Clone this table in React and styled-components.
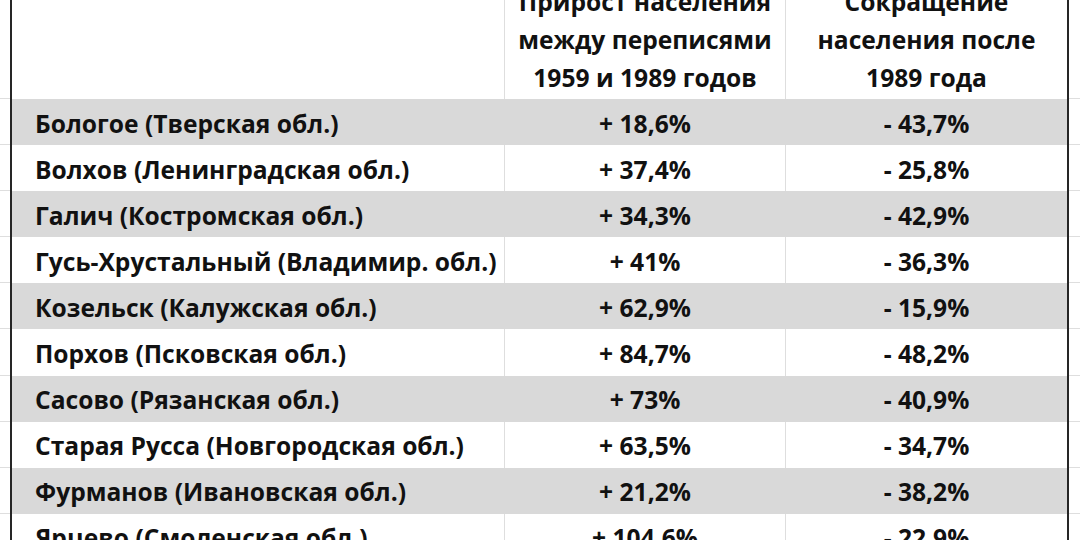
import React from "react";
import styled, { createGlobalStyle } from "styled-components";

const COLORS = {
  shade: "#d9d9d9",
  grid: "#dedede",
  frame: "#262626",
  text: "#111111",
};

const rows = [
  { city: "Бологое (Тверская обл.)", growth: "+ 18,6%", drop: "- 43,7%" },
  { city: "Волхов (Ленинградская обл.)", growth: "+ 37,4%", drop: "- 25,8%" },
  { city: "Галич (Костромская обл.)", growth: "+ 34,3%", drop: "- 42,9%" },
  { city: "Гусь-Хрустальный (Владимир. обл.)", growth: "+ 41%", drop: "- 36,3%" },
  { city: "Козельск (Калужская обл.)", growth: "+ 62,9%", drop: "- 15,9%" },
  { city: "Порхов (Псковская обл.)", growth: "+ 84,7%", drop: "- 48,2%" },
  { city: "Сасово (Рязанская обл.)", growth: "+ 73%", drop: "- 40,9%" },
  { city: "Старая Русса (Новгородская обл.)", growth: "+ 63,5%", drop: "- 34,7%" },
  { city: "Фурманов (Ивановская обл.)", growth: "+ 21,2%", drop: "- 38,2%" },
  { city: "Ярцево (Смоленская обл.)", growth: "+ 104,6%", drop: "- 22,9%" },
];

const GlobalStyle = createGlobalStyle`
  html, body {
    margin: 0;
    padding: 0;
    background: #fff;
    overflow: hidden;
  }
  body {
    font-family: "Open Sans", "Noto Sans", "DejaVu Sans", sans-serif;
    color: ${COLORS.text};
  }
`;

const Sheet = styled.div`
  display: flex;
  flex-direction: column;
  width: 1080px;
  height: 540px;
  overflow: hidden;
`;

const Row = styled.div`
  display: flex;
  height: ${(p) => p.height}px;
  flex-shrink: 0;
`;

const Gutter = styled.div`
  width: ${(p) => p.width}px;
  flex-shrink: 0;
  border-bottom: 1px solid ${COLORS.grid};
  box-sizing: border-box;
`;

const Body = styled.div`
  display: grid;
  grid-template-columns: 493px 281px 1fr;
  grid-template-rows: minmax(0, 1fr);
  width: 1059px;
  flex-shrink: 0;
  border-left: 2px solid ${COLORS.frame};
  border-right: 2px solid ${COLORS.frame};
  box-sizing: border-box;
  background: ${(p) => (p.shaded ? COLORS.shade : "#fff")};
`;

const Cell = styled.div`
  display: flex;
  align-items: center;
  justify-content: ${(p) => (p.left ? "flex-start" : "center")};
  padding-left: ${(p) => (p.left ? "23px" : "0")};
  padding-top: 2px;
  border-right: ${(p) => (p.divider ? `1px solid ${p.shaded ? "transparent" : COLORS.grid}` : "none")};
  font-size: 24.6px;
  font-weight: 700;
  white-space: nowrap;
`;

const HeadCell = styled.div`
  display: flex;
  flex-direction: column;
  justify-content: flex-end;
  align-items: center;
  min-height: 0;
  padding-bottom: 2px;
  border-right: ${(p) => (p.divider ? `1px solid ${COLORS.grid}` : "none")};
  font-size: 24.6px;
  font-weight: 700;
  line-height: 38px;
  text-align: center;
  white-space: nowrap;

  span {
    flex-shrink: 0;
  }
`;

export default function App() {
  return (
    <>
      <GlobalStyle />
      <Sheet>
        <Row height={99}>
          <Gutter width={10} />
          <Body>
            <HeadCell divider />
            <HeadCell divider>
              <span>Прирост населения</span>
              <span>между переписями</span>
              <span>1959 и 1989 годов</span>
            </HeadCell>
            <HeadCell>
              <span>Сокращение</span>
              <span>населения после</span>
              <span>1989 года</span>
            </HeadCell>
          </Body>
          <Gutter width={11} />
        </Row>
        {rows.map((r, i) => {
          const shaded = i % 2 === 0;
          return (
            <Row key={r.city} height={46.1}>
              <Gutter width={10} />
              <Body shaded={shaded}>
                <Cell left divider shaded={shaded}>{r.city}</Cell>
                <Cell divider shaded={shaded}>{r.growth}</Cell>
                <Cell shaded={shaded}>{r.drop}</Cell>
              </Body>
              <Gutter width={11} />
            </Row>
          );
        })}
      </Sheet>
    </>
  );
}
